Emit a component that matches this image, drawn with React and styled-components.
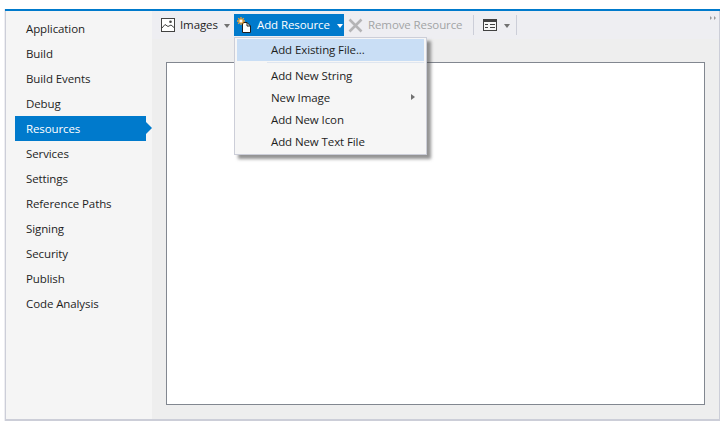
import React from 'react';
import styled, { createGlobalStyle } from 'styled-components';

const Global = createGlobalStyle`
  html, body { margin: 0; padding: 0; background: #fff; }
  body { font-family: "Open Sans", "Noto Sans", sans-serif; font-size: 11.5px; letter-spacing: -0.1px; }
`;
const Page = styled.div`
  width: 725px; height: 429px; padding: 9px 0 0 5px; box-sizing: border-box;
`;
const Frame = styled.div`
  width: 715px; height: 412px; box-sizing: border-box; display: flex; flex-direction: column; position: relative;
  border-left: 1px solid #ccced8; border-right: 1px solid #ccced8; border-bottom: 2px solid #ccced8;
  box-shadow: -1px 0 0 #eeeef2;
`;
const TopRule = styled.div`
  height: 2px; flex: none; background: #007acc; margin: 0 -1px;
`;
const Row = styled.div`
  flex: 1; min-height: 0; display: flex;
`;
const Sidebar = styled.nav`
  width: 146px; flex: none; background: #f5f5f5; padding: 5px 0 0 9px; box-sizing: border-box;
  display: flex; flex-direction: column;
`;
const NavItem = styled.div`
  height: 25px; width: 131px; line-height: 26px; padding-left: 11px; box-sizing: border-box; position: relative;
  color: ${p => (p.$active ? '#fff' : '#1e1e1e')};
  background: ${p => (p.$active ? '#007acc' : 'transparent')};
  ${p => p.$active && `
    &::after {
      content: ''; position: absolute; left: 131px; top: 6px;
      border-left: 6px solid #007acc; border-top: 6px solid transparent; border-bottom: 6px solid transparent;
    }
  `}
`;
const Main = styled.div`
  flex: 1; min-width: 0; display: flex; flex-direction: column; background: #eeeeee;
`;
const Toolbar = styled.div`
  height: 28px; flex: none; background: #eeeef2; display: flex; align-items: flex-start; padding: 0 0 0 9px; position: relative;
`;
const Tool = styled.div`
  height: 22px; margin-top: 3px; display: flex; align-items: center; box-sizing: border-box;
  color: ${p => (p.$active ? '#fff' : p.$disabled ? '#a2a4a5' : '#1e1e1e')};
  background: ${p => (p.$active ? '#007acc' : 'transparent')};
  width: ${p => p.$w}px; padding-left: ${p => p.$pad || 0}px; flex: none;
`;
const ToolLabel = styled.span`
  margin-left: ${p => p.$ml}px; line-height: 22px; white-space: nowrap;
`;
const Caret = styled.i`
  display: block; width: 0; height: 0; margin-left: ${p => p.$ml}px; margin-top: 1px;
  border-top: 4px solid ${p => p.$color}; border-left: 3.5px solid transparent; border-right: 3.5px solid transparent;
`;
const Sep = styled.div`
  width: 1px; height: 20px; margin: 4px ${p => p.$mr}px 0 ${p => p.$ml}px; background: #ccced8; flex: none;
`;
const Grip = styled.div`
  position: absolute; right: 3px; top: 5px; display: flex; gap: 2px;
  i { display: block; width: 0; height: 0; border-left: 2px solid #9a9a9a; border-top: 2px solid transparent; border-bottom: 2px solid transparent; }
`;
const Body = styled.div`
  flex: 1; min-height: 0; padding: 23px 14px 14px 14px;
  display: flex;
`;
const Canvas = styled.div`
  flex: 1; background: #fff; border: 1px solid #828790;
`;
const Menu = styled.div`
  position: absolute; left: 228px; top: 28px; width: 193px; height: 118px; box-sizing: border-box; z-index: 2;
  background: #f6f6f6; border: 1px solid #ccced8; padding: 1px 2px;
  box-shadow: 4px 4px 3px rgba(60,60,60,.55);
`;
const MenuItem = styled.div`
  height: 22px; line-height: 21px; padding-left: 34px; position: relative; color: #1e1e1e;
  background: ${p => (p.$hot ? '#c9def5' : 'transparent')};
`;
const MenuRule = styled.div`
  height: 1px; margin: 1px 0 1px 30px; background: #dfe6f0;
`;
const MenuGap = styled.div` height: 1px; `;
const SubArrow = styled.i`
  position: absolute; right: 9px; top: 7px; width: 0; height: 0;
  border-left: 4px solid #717171; border-top: 3.5px solid transparent; border-bottom: 3.5px solid transparent;
`;

const ImagesIcon = () => (
  <svg width="14" height="14" viewBox="0 0 14 14" style={{ flex: 'none' }}>
    <rect x="0.5" y="0.5" width="13" height="13" fill="#fff" stroke="#424242" />
    <path d="M1 10 L4 6.5 L7 8.5 L10 7 L13 9.5" fill="none" stroke="#424242" />
    <circle cx="9.5" cy="3.8" r="1.3" fill="#424242" />
  </svg>
);
const AddIcon = () => (
  <svg width="15" height="16" viewBox="0 0 15 16" style={{ flex: 'none' }}>
    <path d="M5.5 5.5 H10 L13.5 9 V15.5 H5.5 Z" fill="#fff" stroke="#1e1e1e" />
    <path d="M10 5.5 V9 H13.5" fill="none" stroke="#1e1e1e" />
    <path d="M4 0 V8 M0 4 H8 M1.2 1.2 L6.8 6.8 M6.8 1.2 L1.2 6.8" stroke="#f0a030" strokeWidth="1.3" />
    <circle cx="4" cy="4" r="1.5" fill="#fff" />
  </svg>
);
const XIcon = () => (
  <svg width="15" height="15" viewBox="0 0 15 15" style={{ flex: 'none' }}>
    <path d="M1.5 1.5 L13.5 13.5 M13.5 1.5 L1.5 13.5" stroke="#b4b4b6" strokeWidth="2.6" />
  </svg>
);
const ViewIcon = () => (
  <svg width="14" height="12" viewBox="0 0 14 12" style={{ flex: 'none' }}>
    <rect x="0" y="0" width="14" height="12" fill="#424242" />
    <rect x="1" y="3" width="12" height="8" fill="#f6f6f6" />
    <rect x="2" y="5" width="3" height="1" fill="#424242" />
    <rect x="2" y="8" width="3" height="1" fill="#424242" />
    <rect x="7" y="5" width="5" height="1" fill="#424242" />
    <rect x="7" y="8" width="5" height="1" fill="#424242" />
  </svg>
);

const nav = ['Application', 'Build', 'Build Events', 'Debug', 'Resources', 'Services', 'Settings', 'Reference Paths', 'Signing', 'Security', 'Publish', 'Code Analysis'];

export default function App() {
  return (
    <Page>
      <Global />
      <Frame>
        <TopRule />
        <Row>
          <Sidebar>
            {nav.map(n => <NavItem key={n} $active={n === 'Resources'}>{n}</NavItem>)}
          </Sidebar>
          <Main>
            <Toolbar>
              <Tool $w={73}>
                <ImagesIcon /><ToolLabel $ml={5}>Images</ToolLabel><Caret $ml={6} $color="#717171" />
              </Tool>
              <Tool $w={110} $active $pad={3}>
                <AddIcon /><ToolLabel $ml={5}>Add Resource</ToolLabel><Caret $ml={7} $color="#fff" />
              </Tool>
              <Tool $w={125} $disabled $pad={4}>
                <XIcon /><ToolLabel $ml={5}>Remove Resource</ToolLabel>
              </Tool>
              <Sep $ml={4} $mr={9} />
              <Tool $w={33}>
                <ViewIcon /><Caret $ml={7} $color="#717171" />
              </Tool>
              <Sep $ml={0} $mr={0} />
              <Grip><i /><i /></Grip>
            </Toolbar>
            <Body><Canvas /></Body>
          </Main>
        </Row>
        <Menu>
          <MenuItem $hot>Add Existing File...</MenuItem>
          <MenuRule />
          <MenuGap />
          <MenuItem>Add New String</MenuItem>
          <MenuItem>New Image<SubArrow /></MenuItem>
          <MenuItem>Add New Icon</MenuItem>
          <MenuItem>Add New Text File</MenuItem>
        </Menu>
      </Frame>
    </Page>
  );
}
